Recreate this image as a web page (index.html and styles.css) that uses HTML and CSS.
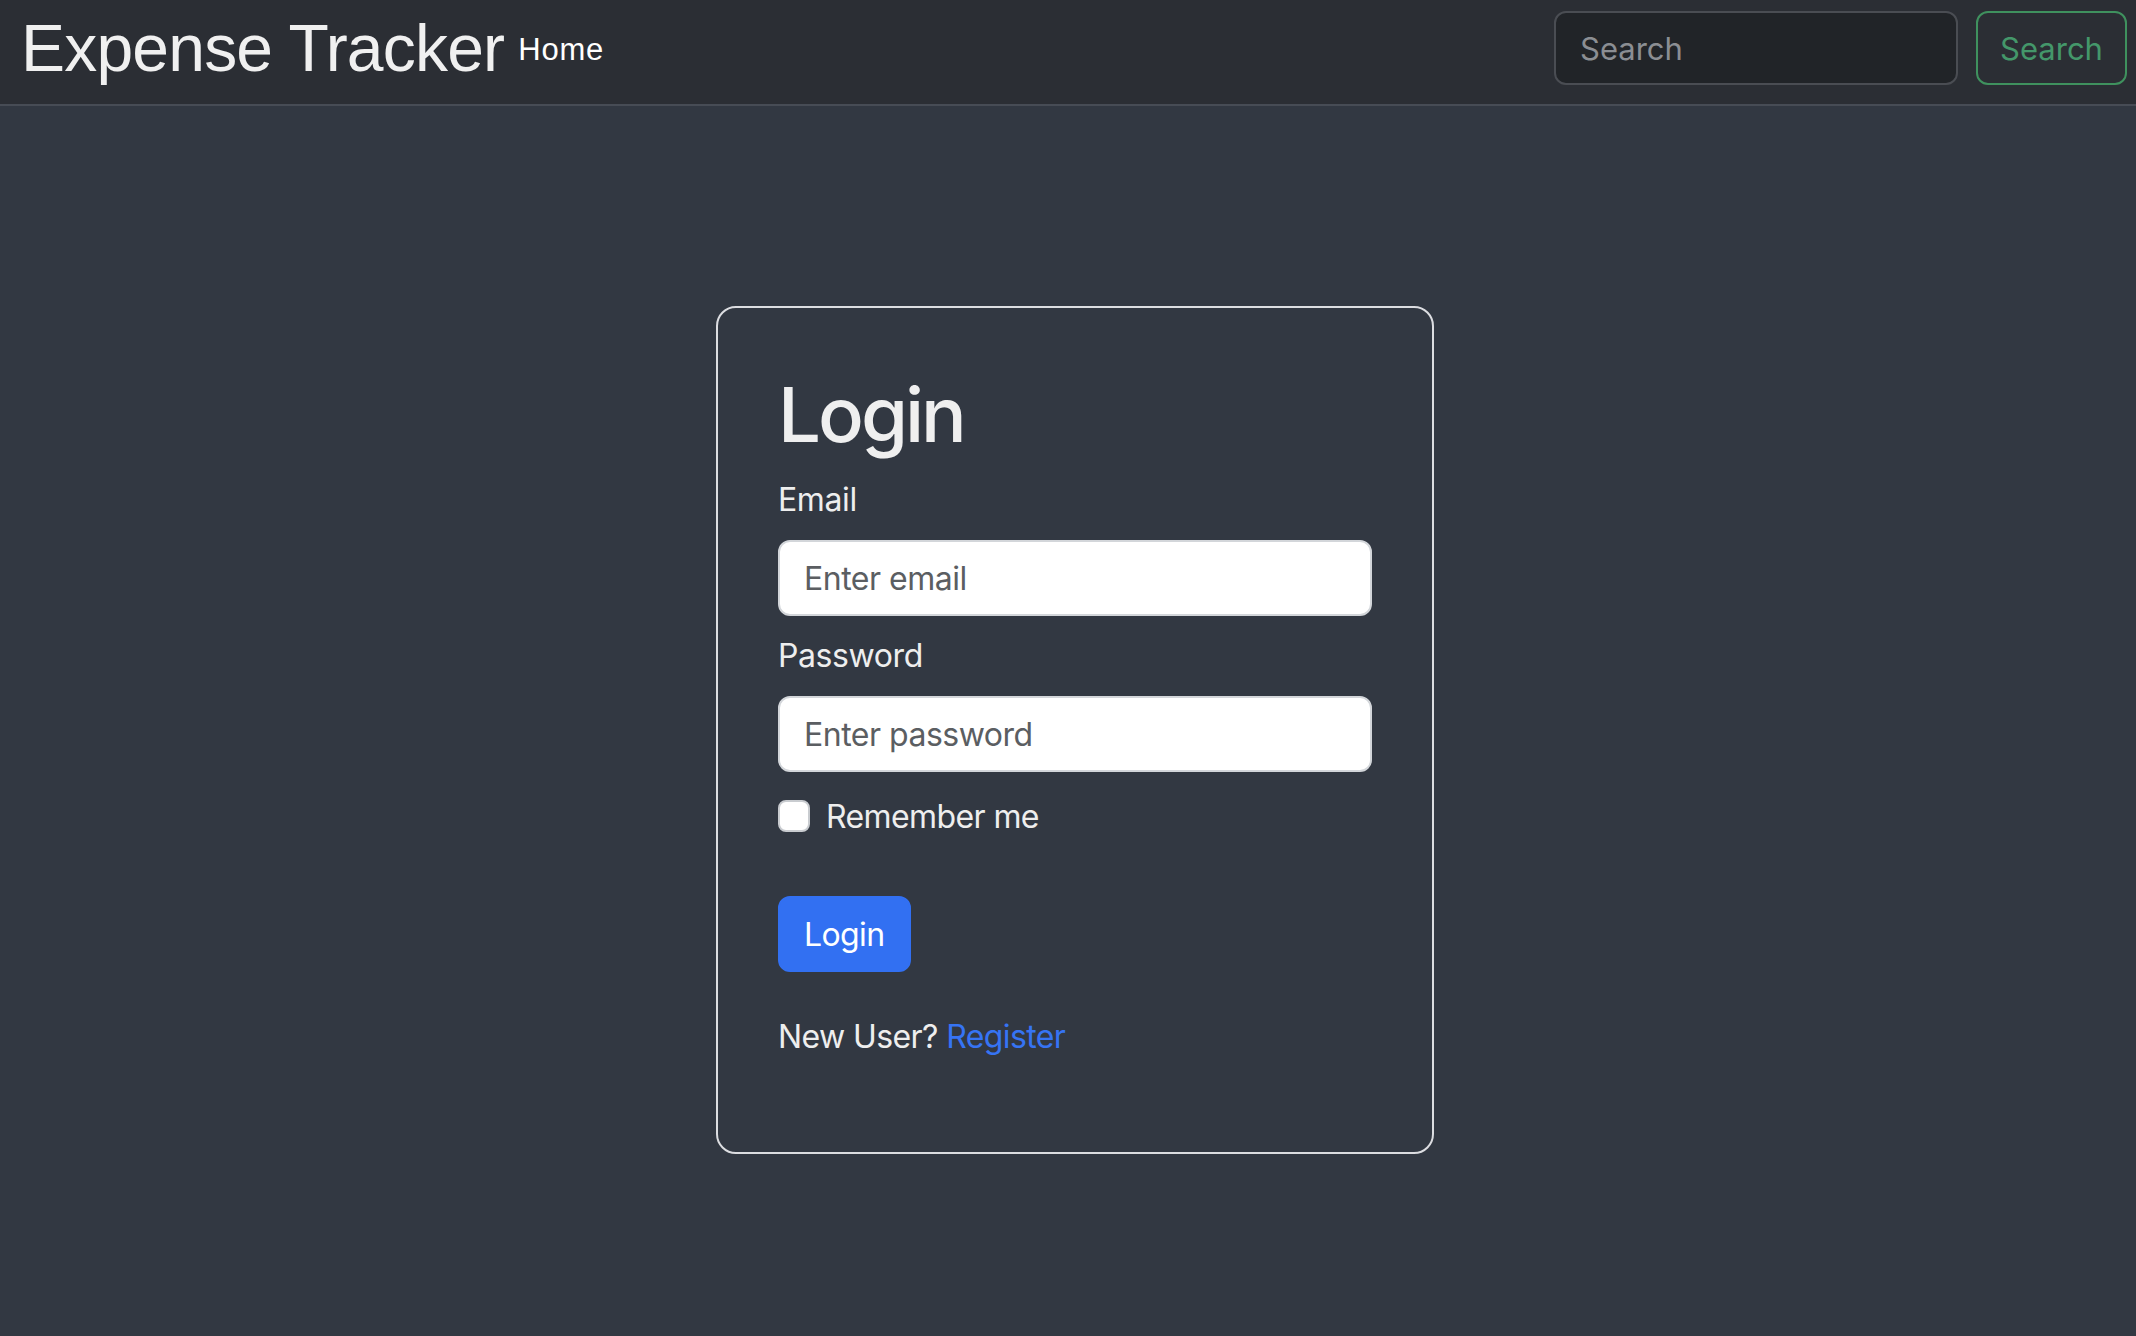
FILE: index.html
```html
<!DOCTYPE html>
<html lang="en">
<head>
<meta charset="utf-8">
<title>Expense Tracker - Login</title>
<link rel="stylesheet" href="styles.css">
</head>
<body>
<nav class="navbar">
  <a class="brand" href="#">Expense Tracker</a>
  <a class="nav-link" href="#">Home</a>
  <form class="search">
    <input class="search-input" type="search" placeholder="Search">
    <button class="search-btn" type="button">Search</button>
  </form>
</nav>
<main class="page">
  <section class="card">
    <h1 class="title">Login</h1>
    <form class="login-form">
      <label class="label" for="email">Email</label>
      <input class="field" id="email" type="email" placeholder="Enter email">
      <label class="label" for="password">Password</label>
      <input class="field" id="password" type="password" placeholder="Enter password">
      <div class="check-row">
        <span class="checkbox"></span>
        <span class="check-label">Remember me</span>
      </div>
      <button class="login-btn" type="button">Login</button>
    </form>
    <p class="register">New User? <a class="link" href="#">Register</a></p>
  </section>
</main>
</body>
</html>
```
FILE: styles.css
```css
* { box-sizing: border-box; }

html, body {
  margin: 0;
  padding: 0;
}

body {
  background: #323842;
  color: #eeeeee;
  font-family: Inter, "Noto Sans", "Liberation Sans", sans-serif;
  min-height: 1336px;
}

.navbar {
  display: flex;
  align-items: flex-start;
  height: 106px;
  padding: 0 9px 0 21px;
  background: #2b2e34;
  border-bottom: 2px solid #474c55;
}

.brand {
  font-family: "Liberation Sans", Arial, sans-serif;
  font-size: 66px;
  line-height: 66px;
  letter-spacing: -0.8px;
  color: #f0f0f0;
  text-decoration: none;
  margin-top: 15px;
}

.nav-link {
  font-family: "Liberation Sans", Arial, sans-serif;
  font-size: 31px;
  line-height: 31px;
  letter-spacing: 0.8px;
  color: #ffffff;
  text-decoration: none;
  margin-top: 34px;
  margin-left: 14px;
}

.search {
  margin-left: auto;
  margin-top: 11px;
  display: flex;
  gap: 18px;
}

.search-input {
  width: 404px;
  height: 74px;
  padding: 0 24px;
  background: #212428;
  border: 2px solid #4a4d53;
  border-radius: 12px;
  color: #e0e0e0;
  font-family: Inter, "Noto Sans", sans-serif;
  font-size: 31px;
  outline: none;
}

.search-input::placeholder { color: #8b8e93; }

.search-btn {
  width: 151px;
  height: 74px;
  padding: 0;
  background: transparent;
  border: 2px solid #3f915e;
  border-radius: 12px;
  color: #44976a;
  font-family: Inter, "Noto Sans", sans-serif;
  font-size: 31px;
}

.page {
  display: flex;
  justify-content: center;
  padding: 200px 0 0 14px;
}

.card {
  width: 718px;
  border: 2px solid #dcdde1;
  border-radius: 20px;
  padding: 58px 60px 91px;
}

.title {
  margin: 0 0 14px;
  font-size: 76px;
  line-height: 96px;
  font-weight: 500;
  letter-spacing: -3px;
  color: #efefef;
}

.login-form {
  display: flex;
  flex-direction: column;
  align-items: flex-start;
}

.label {
  display: block;
  font-size: 32px;
  line-height: 48px;
  margin-bottom: 16px;
  letter-spacing: -0.4px;
}

.field {
  width: 100%;
  height: 76px;
  padding: 0 24px;
  margin-bottom: 16px;
  background: #ffffff;
  border: 2px solid #d3d6da;
  border-radius: 12px;
  font-family: Inter, "Noto Sans", sans-serif;
  font-size: 32px;
  color: #212529;
  letter-spacing: -0.5px;
  outline: none;
}

.field::placeholder { color: #5b5e62; }

.check-row {
  display: flex;
  align-items: flex-start;
  height: 48px;
  margin-top: 5px;
  margin-bottom: 55px;
}

.checkbox {
  width: 32px;
  height: 32px;
  margin-top: 7px;
  background: #ffffff;
  border: 2px solid #c9ccd0;
  border-radius: 8px;
}

.check-label {
  margin-left: 16px;
  font-size: 32px;
  line-height: 48px;
  letter-spacing: -0.6px;
}

.login-btn {
  height: 76px;
  padding: 0 24px;
  background: #3270f2;
  border: 2px solid #3270f2;
  border-radius: 12px;
  color: #ffffff;
  font-family: Inter, "Noto Sans", sans-serif;
  font-size: 32px;
  letter-spacing: -0.6px;
  margin-bottom: 41px;
}

.register {
  margin: 0;
  font-size: 32px;
  line-height: 48px;
  letter-spacing: -0.6px;
}

.link {
  color: #3674f4;
  text-decoration: none;
}
```
